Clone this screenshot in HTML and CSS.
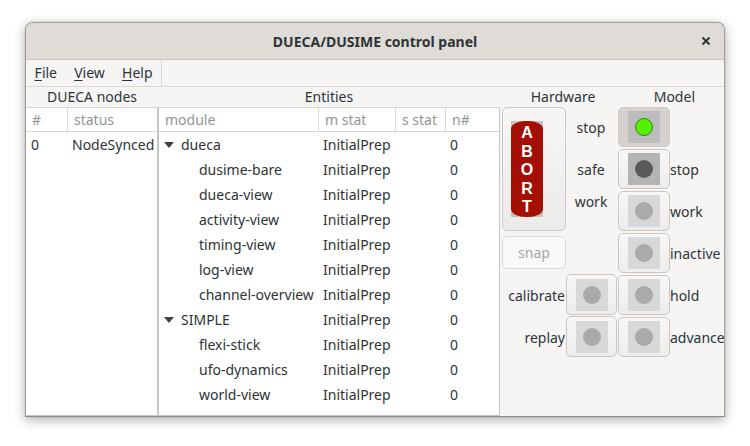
FILE: index.html
```html
<!DOCTYPE html>
<html>
<head>
<meta charset="utf-8">
<link rel="stylesheet" href="styles.css">
</head>
<body>
<div class="window">
  <div class="titlebar">
    <span class="title">DUECA/DUSIME control panel</span>
    <span class="close"><svg width="10" height="10" viewBox="0 0 10 10"><path d="M1.5 1.5 L8.5 8.5 M8.5 1.5 L1.5 8.5" stroke="#2e3436" stroke-width="2" stroke-linecap="butt"/></svg></span>
  </div>
  <div class="menubar">
    <div class="menus">
      <span class="menu"><u>F</u>ile</span>
      <span class="menu"><u>V</u>iew</span>
      <span class="menu"><u>H</u>elp</span>
    </div>
  </div>
  <div class="content">
    <div class="section-label">DUECA nodes</div>
    <div class="section-label">Entities</div>

    <div class="controls">
      <div class="ctl-head hw-head">Hardware</div>
      <div class="ctl-head model-head">Model</div>

      <div class="abort-btn">
        <div class="abort-img">
          <div class="abort-pill"><span>A</span><span>B</span><span>O</span><span>R</span><span>T</span></div>
        </div>
      </div>
      <div class="snap-btn">snap</div>

      <div class="lbl lbl-left r2">stop</div>
      <div class="lbl lbl-left r3">safe</div>
      <div class="lbl lbl-left r4 top">work</div>

      <div class="lbl lbl-right-align r6">calibrate</div>
      <div class="lamp-btn hw r6"><div class="lamp"><div class="dot"></div></div></div>
      <div class="lbl lbl-right-align r7">replay</div>
      <div class="lamp-btn hw r7"><div class="lamp"><div class="dot"></div></div></div>

      <div class="lamp-btn model r2 pressed"><div class="lamp on"><div class="dot"></div></div></div>
      <div class="lamp-btn model r3"><div class="lamp dark"><div class="dot"></div></div></div>
      <div class="lamp-btn model r4"><div class="lamp"><div class="dot"></div></div></div>
      <div class="lamp-btn model r5"><div class="lamp"><div class="dot"></div></div></div>
      <div class="lamp-btn model r6"><div class="lamp"><div class="dot"></div></div></div>
      <div class="lamp-btn model r7"><div class="lamp"><div class="dot"></div></div></div>

      <div class="lbl lbl-model r3">stop</div>
      <div class="lbl lbl-model r4">work</div>
      <div class="lbl lbl-model r5">inactive</div>
      <div class="lbl lbl-model r6">hold</div>
      <div class="lbl lbl-model r7">advance</div>
    </div>

    <div class="table nodes">
      <div class="thead">
        <div class="th c-num">#</div>
        <div class="th c-status">status</div>
      </div>
      <div class="tr">
        <div class="td c-num">0</div>
        <div class="td c-status">NodeSynced</div>
      </div>
    </div>

    <div class="table entities">
      <div class="thead">
        <div class="th c-mod">module</div>
        <div class="th c-ms">m stat</div>
        <div class="th c-ss">s stat</div>
        <div class="th c-n">n#</div>
      </div>
      <div class="tr"><div class="td c-mod"><span class="exp"></span>dueca</div><div class="td c-ms">InitialPrep</div><div class="td c-ss"></div><div class="td c-n">0</div></div>
      <div class="tr"><div class="td c-mod child">dusime-bare</div><div class="td c-ms">InitialPrep</div><div class="td c-ss"></div><div class="td c-n">0</div></div>
      <div class="tr"><div class="td c-mod child">dueca-view</div><div class="td c-ms">InitialPrep</div><div class="td c-ss"></div><div class="td c-n">0</div></div>
      <div class="tr"><div class="td c-mod child">activity-view</div><div class="td c-ms">InitialPrep</div><div class="td c-ss"></div><div class="td c-n">0</div></div>
      <div class="tr"><div class="td c-mod child">timing-view</div><div class="td c-ms">InitialPrep</div><div class="td c-ss"></div><div class="td c-n">0</div></div>
      <div class="tr"><div class="td c-mod child">log-view</div><div class="td c-ms">InitialPrep</div><div class="td c-ss"></div><div class="td c-n">0</div></div>
      <div class="tr"><div class="td c-mod child">channel-overview</div><div class="td c-ms">InitialPrep</div><div class="td c-ss"></div><div class="td c-n">0</div></div>
      <div class="tr"><div class="td c-mod"><span class="exp"></span>SIMPLE</div><div class="td c-ms">InitialPrep</div><div class="td c-ss"></div><div class="td c-n">0</div></div>
      <div class="tr"><div class="td c-mod child">flexi-stick</div><div class="td c-ms">InitialPrep</div><div class="td c-ss"></div><div class="td c-n">0</div></div>
      <div class="tr"><div class="td c-mod child">ufo-dynamics</div><div class="td c-ms">InitialPrep</div><div class="td c-ss"></div><div class="td c-n">0</div></div>
      <div class="tr"><div class="td c-mod child">world-view</div><div class="td c-ms">InitialPrep</div><div class="td c-ss"></div><div class="td c-n">0</div></div>
    </div>
  </div>
</div>
</body>
</html>
```

FILE: styles.css
```css
html, body {
  margin: 0;
  padding: 0;
  background: #ffffff;
}
body {
  font-family: "Noto Sans", "DejaVu Sans", sans-serif;
  font-size: 14px;
  color: #2e3436;
  width: 750px;
  height: 446px;
  overflow: hidden;
}
.window {
  margin: 22px 0 0 25px;
  width: 700px;
  height: 395px;
  box-sizing: border-box;
  border: 1px solid #a19e9a;
  border-bottom-color: #8f8c89;
  border-radius: 8px 8px 0 0;
  background: #f6f5f4;
  box-shadow: 0 3px 12px rgba(0, 0, 0, 0.32), 0 0 2px rgba(0, 0, 0, 0.15);
  overflow: hidden;
  display: flex;
  flex-direction: column;
}
.titlebar {
  height: 36px;
  flex: none;
  background: #dfdcd8;
  border-bottom: 1px solid #c9c5c0;
  display: flex;
  align-items: center;
  justify-content: center;
  position: relative;
}
.title {
  font-weight: bold;
  font-size: 14px;
  color: #2e3436;
  padding-left: 0;
}
.close {
  position: absolute;
  right: 13px;
  top: 13px;
  width: 10px;
  height: 10px;
  display: flex;
}
.menubar {
  height: 26px;
  flex: none;
  border-bottom: 1px solid #dcd8d4;
  display: flex;
}
.menus {
  display: flex;
  border-right: 1px solid #dcd8d4;
}
.menu {
  padding: 0 8.6px;
  line-height: 26px;
  color: #2e3436;
}
.menu u {
  text-decoration-thickness: 1px;
  text-underline-offset: 2px;
}
.content {
  flex: 1;
  display: grid;
  grid-template-columns: 132px 342px 224px;
  grid-template-rows: 20px 309px;
}
.section-label {
  text-align: center;
  line-height: 20px;
  color: #2e3436;
}
.table {
  background: #ffffff;
  box-sizing: border-box;
  border-top: 1px solid #d7d3cf;
  border-bottom: 1px solid #c9c5c0;
  display: flex;
  flex-direction: column;
}
.nodes {
  grid-column: 1;
  grid-row: 2;
  border-right: 1px solid #c9c5c0;
}
.entities {
  grid-column: 2;
  grid-row: 2;
  border-left: 1px solid #c9c5c0;
  border-right: 1px solid #c9c5c0;
}
.thead {
  display: flex;
  height: 23px;
  border-bottom: 1px solid #dcd8d4;
  flex: none;
}
.th {
  box-sizing: border-box;
  color: #929595;
  line-height: 23px;
  padding-left: 6px;
  border-right: 1px solid #dcd8d4;
  white-space: nowrap;
  overflow: hidden;
}
.tr {
  display: flex;
  height: 25px;
  flex: none;
}
.td {
  box-sizing: border-box;
  line-height: 25px;
  padding-left: 5px;
  white-space: nowrap;
  border-right: 1px solid transparent;
  display: flex;
  align-items: center;
}
.nodes .c-num { width: 42px; }
.nodes .c-status { flex: 1; border-right: none; }
.nodes .td.c-status { padding-left: 4px; }
.entities .c-mod { width: 160px; }
.entities .c-ms { width: 77px; }
.entities .c-ss { width: 50px; }
.entities .c-n { flex: 1; border-right: none; }
.entities .td.c-ms, .entities .td.c-n { padding-left: 4px; }
.entities .td.c-mod { padding-left: 5px; }
.entities .td.child { padding-left: 40px; }
.exp {
  width: 0;
  height: 0;
  border-left: 5px solid transparent;
  border-right: 5px solid transparent;
  border-top: 6px solid #3d4345;
  margin: 1px 7px 0 0;
}

/* controls */
.controls {
  grid-column: 3;
  grid-row: 1 / span 2;
  display: grid;
  padding-left: 2px;
  grid-template-columns: 64px 52px 52px 1fr;
  grid-template-rows: 20px repeat(6, 42px) 1fr;
  align-items: start;
}
.ctl-head {
  grid-row: 1;
  line-height: 20px;
  text-align: center;
  padding-left: 6px;
}
.hw-head { grid-column: 1 / span 2; }
.model-head { grid-column: 3 / span 2; }
.r2 { grid-row: 2; }
.r3 { grid-row: 3; }
.r4 { grid-row: 4; }
.r5 { grid-row: 5; }
.r6 { grid-row: 6; }
.r7 { grid-row: 7; }

.abort-btn {
  grid-column: 1;
  grid-row: 2 / span 3;
  height: 124px;
  box-sizing: border-box;
  border: 1px solid #cdc7c2;
  border-radius: 5px;
  background: linear-gradient(#f7f6f5, #edebe9);
  padding: 13px 0 0 8px;
}
.abort-img {
  width: 32px;
  height: 96px;
  background: #c2c2c2;
}
.abort-pill {
  width: 32px;
  height: 96px;
  background: #a30f02;
  border-radius: 15px / 8px;
  display: flex;
  flex-direction: column;
  align-items: center;
  padding-top: 3px;
  box-sizing: border-box;
  font-family: "Liberation Sans", Arial, sans-serif;
  font-weight: bold;
  font-size: 16px;
  line-height: 18.5px;
  color: #ffffff;
}
.abort-pill span {
  display: block;
  height: 18.5px;
}
.snap-btn {
  grid-column: 1;
  grid-row: 5;
  margin-top: 3px;
  height: 33px;
  box-sizing: border-box;
  border: 1px solid #dcd8d4;
  border-radius: 5px;
  background: #faf9f8;
  color: #a5a8a9;
  text-align: center;
  line-height: 31px;
}
.lbl {
  height: 40px;
  display: flex;
  align-items: center;
  white-space: nowrap;
}
.lbl-left {
  grid-column: 2;
  justify-content: center;
  padding-right: 2px;
}
.lbl-left.top {
  height: auto;
  margin-top: 1px;
}
.lbl-right-align {
  grid-column: 1;
  justify-content: flex-end;
  padding-right: 1px;
}
.lbl-model {
  grid-column: 4;
  padding-left: 0;
}
.lamp-btn {
  height: 40px;
  box-sizing: border-box;
  border: 1px solid #cdc7c2;
  border-radius: 5px;
  background: linear-gradient(#f8f7f6, #efedeb);
  display: flex;
  align-items: center;
  justify-content: center;
}
.lamp-btn.hw {
  grid-column: 2;
  width: 51px;
  margin-top: -1px;
  height: 41px;
}
.lamp-btn.model {
  grid-column: 3;
}
.lamp-btn.pressed {
  background: #d6d1cd;
  border-color: #d0cbc6;
}
.lamp {
  width: 32px;
  height: 32px;
  background: #d8d8d8;
  display: flex;
  align-items: center;
  justify-content: center;
}
.dot {
  width: 18px;
  height: 18px;
  border-radius: 50%;
  background: #aaaaaa;
}
.lamp.on { background: #bcbcbc; }
.lamp.on .dot {
  width: 16px;
  height: 16px;
  background: #55f000;
  border: 1px solid #3f7d1a;
}
.lamp.dark { background: #b4b4b4; }
.lamp.dark .dot { background: #5b5b5b; }
```
